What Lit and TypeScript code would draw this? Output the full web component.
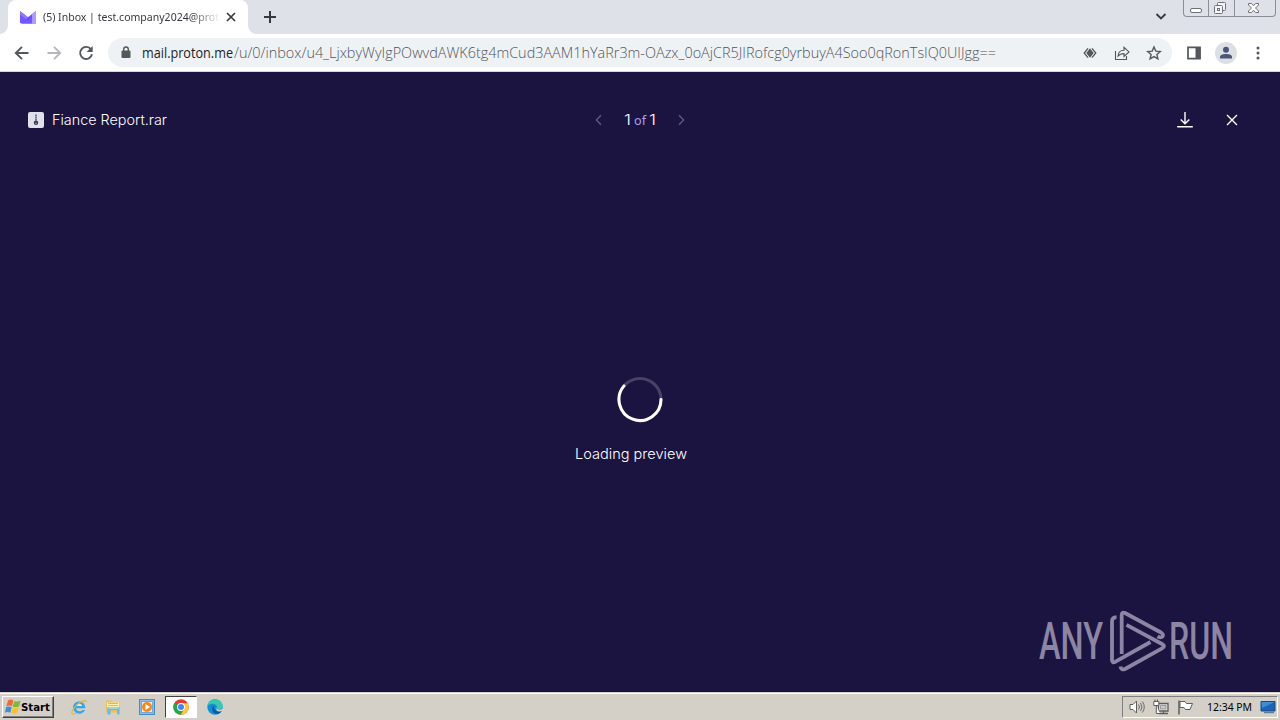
import { css, html, LitElement, svg } from "lit";
import { customElement, property } from "lit/decorators.js";

// Single line of text set to a fixed advance width.
@customElement("fit-text")
export class FitText extends LitElement {
  @property() text = "";
  @property({ type: Number }) width = 100;
  @property({ type: Number }) height = 20;
  @property({ type: Number }) baseline = 15;

  static styles = css`
    :host {
      display: block;
      flex: none;
    }
    svg {
      display: block;
      overflow: visible;
    }
    text {
      fill: currentColor;
    }
  `;

  render() {
    return html`
      <svg width=${this.width} height=${this.height}>
        <text
          x="0"
          y=${this.baseline}
          textLength=${this.width}
          lengthAdjust="spacingAndGlyphs"
        >${this.text}</text>
      </svg>
    `;
  }
}

const icons = {
  back: svg`<path d="M14.5 8H2M8 1.8 1.8 8 8 14.2" fill="none" stroke="currentColor" stroke-width="1.9"/>`,
  forward: svg`<path d="M1.5 8H14M8 1.8 14.2 8 8 14.2" fill="none" stroke="currentColor" stroke-width="1.9"/>`,
  reload: svg`<path d="M13 4.4A6 6 0 1 0 14 9.2" fill="none" stroke="currentColor" stroke-width="1.9"/><path d="M14.7 1v6.1H8.6z" fill="currentColor"/>`,
  lock: svg`<rect x="3.5" y="5.5" width="9" height="7.5" rx="1" fill="currentColor"/><path d="M5.7 6V4.300a2.300 2.300 0 0 1 4.600 0V6" fill="none" stroke="currentColor" stroke-width="1.400"/>`,
  eye: svg`<path d="M6 3.300 2.200 8 6 12.700M10 3.300 13.800 8 10 12.700" fill="none" stroke="currentColor" stroke-width="1.300"/><path d="m8 3.200 3.700 4.800L8 12.800 4.300 8z" fill="currentColor"/>`,
  share: svg`<path d="M1.5 6v8.5h11V11M4 11.2c.2-4 2.6-6 6-6V2.3l5 4.6-5 4.5V8.6c-2.7 0-4.4.6-6 2.6z" fill="none" stroke="currentColor" stroke-width="1.1"/>`,
  star: svg`<path d="m8 2 1.800 4.100 4.500.4-3.400 3 1 4.400L8 11.600l-3.900 2.300 1-4.400-3.400-3 4.500-.4z" fill="none" stroke="currentColor" stroke-width="1.4"/>`,
  panel: svg`<path d="M2 2.3h12v11.4H2z" fill="none" stroke="currentColor" stroke-width="1.7"/><path d="M9.5 2h5v12h-5z" fill="currentColor"/>`,
  person: svg`<circle cx="8" cy="4.7" r="3" fill="currentColor"/><path d="M2 13.4v-1.6C2 9.7 5.8 9 8 9s6 .7 6 2.8v1.6z" fill="currentColor"/>`,
  more: svg`<circle cx="8" cy="3" r="1.5" fill="currentColor"/><circle cx="8" cy="8" r="1.5" fill="currentColor"/><circle cx="8" cy="13" r="1.5" fill="currentColor"/>`,
  chevronDown: svg`<path d="m3.5 6 4.5 4.5L12.5 6" fill="none" stroke="currentColor" stroke-width="1.8"/>`,
  plus: svg`<path d="M8 2v12M2 8h12" stroke="currentColor" stroke-width="2"/>`,
  tabClose: svg`<path d="m4 4 8 8M12 4l-8 8" stroke="currentColor" stroke-width="1.7"/>`,
  close: svg`<path d="m3 3 10 10M13 3 3 13" stroke="currentColor" stroke-width="1.4"/>`,
  prev: svg`<path d="M10 3.2 5.4 8l4.6 4.8" fill="none" stroke="currentColor" stroke-width="1.3"/>`,
  next: svg`<path d="M6 3.2 10.6 8 6 12.8" fill="none" stroke="currentColor" stroke-width="1.3"/>`,
  download: svg`<path d="M8 0v11.5M3.7 7.5 8 11.8l4.3-4.3M.2 14.8h15.6" fill="none" stroke="currentColor" stroke-width="1.4"/>`,
  proton: svg`<path d="M0 2 8 8.200 16 2v12.500H2q-2 0-2-2z" fill="#6a4bff"/><path d="M0 2 8 8.200 5.500 11 0 6.500z" fill="#8f7bff"/><path d="M0 5.500 8 11.500l4-3.500v6.500H2q-2 0-2-2z" fill="#7557ff"/><path d="M12 5.100 16 2v12.500h-4z" fill="#ad9bff"/>`,
  archive: svg`<rect width="16" height="16" rx="2" fill="#dfe0ea"/><path d="M8 2.500V9" stroke="#55586b" stroke-width="1.600" stroke-dasharray="1.500 .5"/><circle cx="8" cy="10.800" r="2.200" fill="#34384b"/><circle cx="8" cy="11.200" r=".6" fill="#dfe0ea"/>`,
  windows: svg`<path d="M3 1.500C5 0 6.800.3 8.300 1.500L7 7.200C5.200 6.200 3.200 6.300 1.400 7.200z" fill="#ef6a35"/><path d="M9.200 1.900c2 1 4.200.9 6.400-.3l-1.400 5.600c-2 1.200-4.400 1.200-6.400.4z" fill="#7dba39"/><path d="M1.200 8.100c1.800-.9 3.600-.9 5.500.1l-1.400 5.600c-2-1.100-3.700-1-5.500-.1z" fill="#438dd8"/><path d="M7.600 8.600c2 .9 4.200.8 6.300-.3l-1.400 5.600c-2 1.200-4.300 1.200-6.300.3z" fill="#f8c332"/>`,
  explorer: svg`<path d="M14.300 9.300H5c.3 3.300 4.800 4 6.700 1.700h2.400c-3 6-12 4.300-12-2.800 0-6.900 12-8.400 12.200 1.100z" fill="#39a5e2"/><path d="M5.100 7h6c-.4-3.100-5.400-3.100-6 0z" fill="#e4e8ea"/><path d="M15.400 3.300c.2-3.400-5.100-1.300-9 2.100C2.500 9-.4 13.500 1.400 14.900c.9.700 2.400.1 3.700-.7" fill="none" stroke="#e6b53c" stroke-width="1.2"/>`,
  folder: svg`<path d="M1 1.500h5L7 3h7.500v10.500H1z" fill="#e5c25d"/><path d="M2 3.500h12v5H2z" fill="#fff2b1"/><path d="M3 4.500h10M3 6.500h10" stroke="#8db174" stroke-width=".7"/><path d="M2.500 8h12v7.500H12v-4.500H5.500v4.500h-3z" fill="#6eb9e2"/><path d="M3.500 9h10" stroke="#c8ecfa"/>`,
  media: svg`<rect x=".5" y=".5" width="15" height="15" fill="#8dbce8" stroke="#478bc2"/><rect x="2.5" y="2.5" width="11" height="11" fill="#e5f0f8" stroke="#74a7d1"/><circle cx="8" cy="8" r="5" fill="#f28b1c"/><path d="m6.5 5 4.5 3-4.5 3z" fill="#fff"/>`,
  chrome: svg`<circle cx="8" cy="8" r="7.7" fill="#e33b2e"/><path d="M8 8 1.3 4.2A7.7 7.7 0 0 0 7.7 15.7L11.3 10z" fill="#27a74a"/><path d="M8 4.3h6.7A7.7 7.7 0 0 1 7.7 15.7L11.4 9.5z" fill="#fcc934"/><circle cx="8" cy="8" r="3.9" fill="#fff"/><circle cx="8" cy="8" r="3" fill="#4285f4"/>`,
  edge: svg`<circle cx="8" cy="8" r="7.7" fill="#168cd2"/><path d="M.3 7.5C1 2 5-.1 9 .4c5 .6 7.800 5.300 6.500 8.200-1 2.300-5.200 2.200-6 .7.700-1 .9-2.400-.6-3.400C6 4 2 4.500.3 7.500z" fill="#38c7b0"/><path d="M6.800 6.500C3 9.700 6.500 15.500 11 15c1.700-.4 3-1.500 3.800-2.900-4.500 1.500-8.300-.8-8-5.600z" fill="#075aa8"/><path d="M9.300 9.300c1 1.500 3.600 2 6.400.4l1 2.400h-2c-3.200.9-6-.5-5.400-2.800z" fill="#d4d0c8"/>`,
  volume: svg`<path d="M1 5.500h3L7.500 2v12L4 10.500H1z" fill="#fff" stroke="currentColor"/><path d="M9.500 5.500q2 2.500 0 5M11.500 4q3 4 0 8M13.300 2.500q4 5.500 0 11" fill="none" stroke="currentColor" stroke-width=".9"/>`,
  network: svg`<path d="M5.500 4.500h9.500v7.500h-9.500zM6 14.500h9M10.500 12v2" fill="#e9e7e2" stroke="currentColor" stroke-width="1.3"/><path d="M7.500 6.500h5.500v3.500H7.500z" fill="#c9cbcf" stroke="currentColor" stroke-width=".5"/><path d="M.8 2.500h5v4h-5zM2 .5v2M4.500.5v2M3.300 6.500v8H7" fill="#fff" stroke="currentColor"/>`,
  flag: svg`<path d="M2 15.500V1.500" stroke="currentColor" stroke-width="1.5"/><path d="M3 2.500h5l1.500 2h6l-2.500 6H8.500L7 8.500H3z" fill="#fff" stroke="currentColor"/>`,
  desktop: svg`<path d="M1 2.500h14V12H1z" fill="#1c63b4" stroke="#184b85"/><path d="M1.500 3h13L2 9z" fill="#3e8cd6"/><path d="M4 13.500h10" stroke="#5d7d9e" stroke-width="1.5"/>`,
};

@customElement("app-root")
export class AppRoot extends LitElement {
  static styles = css`
    :host {
      display: flex;
      flex-direction: column;
      width: 1280px;
      height: 720px;
      overflow: hidden;
      background: #1b1340;
      font-family: "Noto Sans", "Liberation Sans", sans-serif;
    }
    * {
      box-sizing: border-box;
    }
    svg {
      display: block;
      flex: none;
    }
    .tabs {
      display: flex;
      flex: none;
      height: 34px;
      padding-left: 8px;
      background: #dee1e8;
      color: #36393e;
    }
    .tab {
      position: relative;
      display: flex;
      align-items: center;
      width: 240px;
      padding-left: 12px;
      border-radius: 8px 8px 0 0;
      background: #fff;
    }
    .tab::before,
    .tab::after {
      position: absolute;
      bottom: 0;
      width: 8px;
      height: 8px;
      content: "";
    }
    .tab::before {
      left: -8px;
      background: radial-gradient(circle at 0 0, transparent 7.5px, #fff 8px);
    }
    .tab::after {
      right: -8px;
      background: radial-gradient(circle at 100% 0, transparent 7.5px, #fff 8px);
    }
    .tab-title {
      width: 176px;
      margin: 0 5px 0 7px;
      font-size: 11.5px;
      mask-image: linear-gradient(to right, #000 148px, transparent 178px);
    }
    .tab-close {
      margin-left: -1px;
    }
    .new-tab {
      margin: 9px 0 0 14px;
    }
    .tab-search {
      margin: 8px 14px 0 auto;
    }
    .window-buttons {
      display: flex;
      width: 93px;
      height: 17px;
      margin-right: 4px;
      border: 1px solid #8b8e96;
      border-top: 0;
      border-radius: 0 0 4px 4px;
      color: #6c7078;
    }
    .window-buttons svg + svg {
      border-left: 1px solid #8b8e96;
    }
    .toolbar {
      display: flex;
      flex: none;
      align-items: center;
      height: 38px;
      padding: 0 14px;
      border-bottom: 1px solid #d5d5dc;
      background: #fff;
      color: #54575b;
    }
    .nav {
      display: flex;
      gap: 16px;
      width: 94px;
    }
    .disabled {
      color: #b5b7ba;
    }
    .address {
      display: flex;
      align-items: center;
      width: 1064px;
      height: 29px;
      padding: 0 10px;
      border-radius: 15px;
      background: #eff2f5;
      font-family: "Open Sans", "Noto Sans", sans-serif;
      font-size: 14.5px;
    }
    .domain {
      margin: 0 1px 0 8px;
      color: #202328;
    }
    .path {
      color: #50555a;
      font-weight: 300;
    }
    .address-actions {
      display: flex;
      gap: 16px;
      margin-left: auto;
    }
    .browser-actions {
      display: flex;
      align-items: center;
      gap: 13px;
      margin-left: 14px;
    }
    .avatar {
      display: grid;
      place-items: center;
      width: 22px;
      height: 22px;
      border-radius: 50%;
      background: #dce0e6;
      color: #4b5674;
    }
    .viewer {
      position: relative;
      display: flex;
      flex: 1;
      flex-direction: column;
      color: #fff;
      font-family: Inter, "Liberation Sans", sans-serif;
      font-weight: 300;
    }
    .viewer-header {
      display: grid;
      grid-template-columns: 1fr 98px 1fr;
      align-items: center;
      height: 96px;
      padding: 0 40px 0 28px;
      padding: 0 28px;
      font-size: 14px;
    }
    .file,
    .pager,
    .actions {
      display: flex;
      align-items: center;
    }
    .file {
      gap: 8px;
    }
    .pager {
      justify-content: space-between;
    }
    .count {
      display: flex;
      gap: 3px;
    }
    .of {
      color: #aaa0ee;
      font-family: "Noto Sans", sans-serif;
      font-size: 13px;
      font-weight: 400;
    }
    .muted {
      color: #625b82;
    }
    .actions {
      justify-content: flex-end;
      gap: 31px;
      padding-right: 12px;
    }
    .loading {
      display: flex;
      flex-direction: column;
      align-items: center;
      gap: 21px;
      padding-top: 209px;
      font-size: 14.5px;
    }
    .loading fit-text {
      margin-right: 19px;
    }
    .watermark {
      position: absolute;
      right: 47px;
      bottom: 20px;
      display: flex;
      align-items: center;
      color: #8c85a3;
      font-family: Roboto, sans-serif;
      font-size: 52px;
      font-weight: 500;
    }
    .taskbar {
      display: flex;
      flex: none;
      align-items: center;
      height: 28px;
      padding: 1px 2px 0;
      border-top: 1px solid #d4d0c8;
      box-shadow: inset 0 1px #fff;
      background: #d4d0c8;
    }
    .start {
      display: flex;
      align-items: center;
      width: 52px;
      height: 22px;
      padding-left: 2px;
      border: 1px solid;
      border-color: #fff #404040 #404040 #fff;
      box-shadow: inset -1px -1px #808080;
      color: #000;
      font-family: "DejaVu Sans", sans-serif;
      font-size: 11px;
      font-weight: bold;
    }
    .launchers {
      display: flex;
      align-items: center;
      gap: 2px;
      margin-left: 9px;
    }
    .launcher {
      display: grid;
      place-items: center;
      width: 32px;
      height: 22px;
    }
    .launcher.active {
      border: 1px solid;
      border-color: #404040 #fff #fff #404040;
      background: #fff;
    }
    .tray {
      display: flex;
      align-items: center;
      width: 156px;
      height: 22px;
      margin-left: auto;
      padding-left: 6px;
      border: 1px solid;
      border-color: #808080 #fff #fff #808080;
      color: #5e5e5e;
      font-size: 11px;
    }
    .tray-icons {
      display: flex;
      gap: 8px;
    }
    .clock {
      margin: 0 8px 0 14px;
      color: #000;
    }
  `;

  icon(name: keyof typeof icons, cls = "") {
    return html`<svg class=${cls} width="16" height="16" viewBox="0 0 16 16">
      ${icons[name]}
    </svg>`;
  }

  text(text: string, width: number, height: number, baseline: number, cls = "") {
    return html`<fit-text
      class=${cls}
      .text=${text}
      .width=${width}
      .height=${height}
      .baseline=${baseline}
    ></fit-text>`;
  }

  renderTabs() {
    return html`
      <div class="tabs">
        <div class="tab">
          ${this.icon("proton")}
          <div class="tab-title">
            ${this.text("(5) Inbox | test.company2024@prot", 176, 18, 13)}
          </div>
          ${this.icon("tabClose", "tab-close")}
        </div>
        ${this.icon("plus", "new-tab")}
        ${this.icon("chevronDown", "tab-search")}
        <div class="window-buttons">
          <svg width="24" height="16">
            <rect x="6.5" y="8.5" width="11" height="4" rx="1.5" fill="#fff" stroke="currentColor" />
          </svg>
          <svg width="26" height="16" fill="#f4f5f7" stroke="currentColor">
            <rect x="8.5" y="2.5" width="8" height="8" rx="1" />
            <rect x="5.5" y="5.5" width="8" height="8" rx="1" />
            <rect x="8.5" y="8.5" width="2" height="2" />
          </svg>
          <svg width="41" height="16">
            <path
              d="M13.500 3.500h3l2 2.300 2-2.300h3v1.500L20.500 8l3 3v1.500h-3l-2-2.300-2 2.300h-3V11l3-3-3-3z"
              fill="#fff"
              stroke="currentColor"
            />
          </svg>
        </div>
      </div>
    `;
  }

  renderToolbar() {
    return html`
      <div class="toolbar">
        <div class="nav">
          ${this.icon("back")} ${this.icon("forward", "disabled")}
          ${this.icon("reload")}
        </div>
        <div class="address">
          ${this.icon("lock")}
          ${this.text("mail.proton.me", 91, 20, 15, "domain")}
          ${this.text(
            "/u/0/inbox/u4_LjxbyWyIgPOwvdAWK6tg4mCud3AAM1hYaRr3m-OAzx_0oAjCR5JIRofcg0yrbuyA4Soo0qRonTsIQ0UIJgg==",
            762,
            20,
            15,
            "path",
          )}
          <div class="address-actions">
            ${this.icon("eye")} ${this.icon("share")} ${this.icon("star")}
          </div>
        </div>
        <div class="browser-actions">
          ${this.icon("panel")}
          <div class="avatar">${this.icon("person")}</div>
          ${this.icon("more")}
        </div>
      </div>
    `;
  }

  renderViewer() {
    return html`
      <div class="viewer">
        <div class="viewer-header">
          <div class="file">
            ${this.icon("archive")} ${this.text("Fiance Report.rar", 115, 20, 15)}
          </div>
          <div class="pager">
            ${this.icon("prev", "muted")}
            <div class="count">
              ${this.text("1", 7, 20, 15)} ${this.text("of", 12, 20, 15, "of")}
              ${this.text("1", 7, 20, 15)}
            </div>
            ${this.icon("next", "muted")}
          </div>
          <div class="actions">
            ${this.icon("download")} ${this.icon("close")}
          </div>
        </div>
        <div class="loading">
          <svg width="46" height="46" fill="none" stroke-width="3">
            <circle cx="23" cy="22.5" r="21" stroke="#494266" />
            <path d="M44 22.5A21 21 0 1 1 7 8.9" stroke="#fff" stroke-linecap="round" />
          </svg>
          ${this.text("Loading preview", 112, 20, 15)}
        </div>
        <div class="watermark">
          ${this.text("ANY", 64, 62, 49)}
          <svg
            width="66"
            height="62"
            viewBox="1 0 66 62"
            fill="none"
            stroke="currentColor"
            stroke-width="3.8"
            stroke-linejoin="round"
          >
            <path d="M19.7 44V5q0-3.5 3.300-2L59 22.500q3 2 1.500 4-1.500 1.700-5-.2" />
            <path d="M14.500 7.500q-4.500-.5-4.500 4V50q0 3.500 3.500 1.700L48.500 32" />
            <path d="M24.500 14.800 60 34q4 2 0 4.300L23 59q-4 1.500-4.500-2.500" />
          </svg>
          ${this.text("RUN", 64, 62, 49)}
        </div>
      </div>
    `;
  }

  renderTaskbar() {
    return html`
      <div class="taskbar">
        <div class="start">
          ${this.icon("windows")} ${this.text("Start", 29, 18, 13)}
        </div>
        <div class="launchers">
          <div class="launcher">${this.icon("explorer")}</div>
          <div class="launcher">${this.icon("folder")}</div>
          <div class="launcher">${this.icon("media")}</div>
          <div class="launcher active">${this.icon("chrome")}</div>
          <div class="launcher">${this.icon("edge")}</div>
        </div>
        <div class="tray">
          <div class="tray-icons">
            ${this.icon("volume")} ${this.icon("network")} ${this.icon("flag")}
          </div>
          ${this.text("12:34 PM", 45, 18, 13, "clock")}
          ${this.icon("desktop")}
        </div>
      </div>
    `;
  }

  render() {
    return html`
      ${this.renderTabs()} ${this.renderToolbar()} ${this.renderViewer()}
      ${this.renderTaskbar()}
    `;
  }
}
